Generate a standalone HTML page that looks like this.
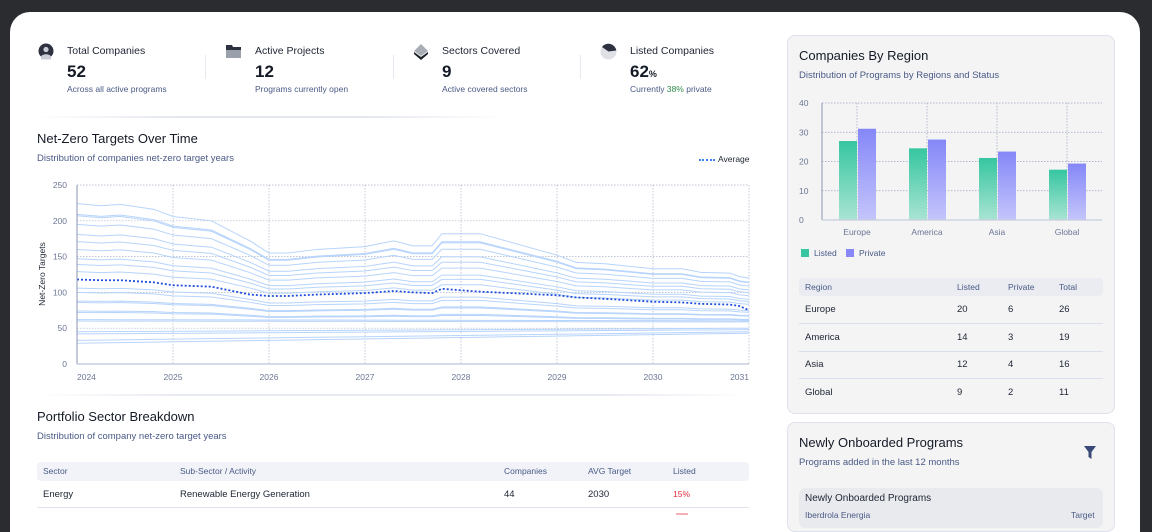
<!DOCTYPE html>
<html><head><meta charset="utf-8"><style>
*{margin:0;padding:0;box-sizing:border-box}
body{width:1152px;height:516px;background:#2b2c2f;font-family:"Liberation Sans",sans-serif;position:relative;overflow:hidden;color:#1d2433}
.main{position:absolute;left:10px;top:12px;width:1130px;height:520px;background:#fff;border-radius:20px 20px 0 0}
.a{position:absolute;white-space:nowrap}
.st{font-size:10.5px;color:#1d2433}
.sn{font-size:17px;font-weight:bold;color:#141a26}
.ss{font-size:8.5px;color:#4a5a86}
.h{font-size:13px;color:#141a26}
.sub{font-size:9.5px;color:#4a5a86}
.card{position:absolute;left:787px;width:328px;background:#f4f4f5;border:1px solid #dde2ec;border-radius:8px}
.t{font-size:9.5px;color:#1d2433}
.th{font-size:8.5px;color:#4a5a86}
</style></head><body>
<div class="main"></div>

<svg class="a" style="left:38px;top:43px" width="16" height="18"><circle cx="8" cy="8" r="7.5" fill="#2d3140"/><circle cx="8" cy="6.5" r="2.6" fill="#c9ccd4"/><path d="M3 13.5c1.5-3 8.5-3 10 0v3H3z" fill="#c9ccd4"/></svg>
<div class="a st" style="left:67px;top:45px">Total Companies</div>
<div class="a sn" style="left:67px;top:62px">52</div>
<div class="a ss" style="left:67px;top:84px">Across all active programs</div>
<div class="a" style="left:205px;top:55px;width:1px;height:24px;background:#e6e9f0"></div>

<svg class="a" style="left:226px;top:44px" width="15" height="15"><path d="M0 1h6l1 2h8v3H0z" fill="#2d3140"/><rect x="0" y="6" width="15" height="8" fill="#9aa0ab"/></svg>
<div class="a st" style="left:255px;top:45px">Active Projects</div>
<div class="a sn" style="left:255px;top:62px">12</div>
<div class="a ss" style="left:255px;top:84px">Programs currently open</div>
<div class="a" style="left:393px;top:55px;width:1px;height:24px;background:#e6e9f0"></div>

<svg class="a" style="left:413px;top:43px" width="16" height="18"><path d="M1 9l7 5 7-5v2l-7 6-7-6z" fill="#1d2028"/><path d="M8 1l7 7-7 5-7-5z" fill="#a9adb6"/></svg>
<div class="a st" style="left:442px;top:45px">Sectors Covered</div>
<div class="a sn" style="left:442px;top:62px">9</div>
<div class="a ss" style="left:442px;top:84px">Active covered sectors</div>
<div class="a" style="left:580px;top:55px;width:1px;height:24px;background:#e6e9f0"></div>

<svg class="a" style="left:600px;top:43px" width="17" height="17"><circle cx="8.5" cy="8.5" r="8" fill="#dfe1e6"/><path d="M8.5 8.5L2 4A8 8 0 0 1 16.3 7.5z" fill="#2d3140"/></svg>
<div class="a st" style="left:630px;top:45px">Listed Companies</div>
<div class="a sn" style="left:630px;top:62px">62<span style="font-size:9px">%</span></div>
<div class="a ss" style="left:630px;top:84px">Currently <span style="color:#2f8a4a">38%</span> private</div>

<div class="a" style="left:35px;top:116px;width:470px;height:2px;background:linear-gradient(90deg,#fff,#e4e7f0 30%,#e4e7f0 70%,#fff)"></div>

<div class="a h" style="left:37px;top:131px">Net-Zero Targets Over Time</div>
<div class="a sub" style="left:37px;top:153px">Distribution of companies net-zero target years</div>
<div class="a" style="left:699px;top:159px;width:16px;border-top:2px dotted #3b82f6"></div>
<div class="a" style="left:718px;top:154px;font-size:8.5px;color:#1d2433">Average</div>

<svg id="ch" class="a" style="left:0;top:0" width="760" height="390"></svg>

<div class="a" style="left:37px;top:394px;width:712px;height:2px;background:linear-gradient(90deg,#fff,#e8eaf2 20%,#e8eaf2 80%,#fff)"></div>

<div class="a h" style="left:37px;top:409px">Portfolio Sector Breakdown</div>
<div class="a sub" style="left:37px;top:431px">Distribution of company net-zero target years</div>
<div class="a" style="left:37px;top:462px;width:712px;height:19px;background:#f1f3f8;border-radius:4px"></div>
<div class="a th" style="left:43px;top:466px">Sector</div>
<div class="a th" style="left:180px;top:466px">Sub-Sector / Activity</div>
<div class="a th" style="left:504px;top:466px">Companies</div>
<div class="a th" style="left:588px;top:466px">AVG Target</div>
<div class="a th" style="left:673px;top:466px">Listed</div>
<div class="a t" style="left:43px;top:489px">Energy</div>
<div class="a t" style="left:180px;top:489px">Renewable Energy Generation</div>
<div class="a t" style="left:504px;top:489px">44</div>
<div class="a t" style="left:588px;top:489px">2030</div>
<div class="a" style="left:673px;top:489px;font-size:8.5px;color:#e0303a">15%</div>
<div class="a" style="left:37px;top:507px;width:712px;height:1px;background:#dfe3ec"></div>
<div class="a" style="left:676px;top:513px;width:12px;height:2px;background:#f4b0b4"></div>

<div class="card" style="top:35px;height:379px"></div>
<div class="a" style="left:799px;top:48px;font-size:13px;color:#141a26">Companies By Region</div>
<div class="a sub" style="left:799px;top:70px">Distribution of Programs by Regions and Status</div>
<svg id="bc" class="a" style="left:780px;top:90px" width="340" height="180"></svg>
<div class="a" style="left:801px;top:249px;width:8px;height:8px;background:#36c6a0"></div>
<div class="a th" style="left:814px;top:248px">Listed</div>
<div class="a" style="left:846px;top:249px;width:8px;height:8px;background:#8888f8"></div>
<div class="a th" style="left:859px;top:248px">Private</div>

<div class="a" style="left:799px;top:278px;width:304px;height:18px;background:#eaecf2;border-radius:4px"></div>
<div class="a th" style="left:805px;top:282px">Region</div>
<div class="a th" style="left:957px;top:282px">Listed</div>
<div class="a th" style="left:1008px;top:282px">Private</div>
<div class="a th" style="left:1059px;top:282px">Total</div>
<div id="rt"></div>

<div class="card" style="top:422px;height:110px"></div>
<div class="a" style="left:799px;top:435px;font-size:13px;color:#141a26">Newly Onboarded Programs</div>
<div class="a sub" style="left:799px;top:457px">Programs added in the last 12 months</div>
<svg class="a" style="left:1084px;top:446px" width="12" height="13"><path d="M0 0h12L7.5 6v7L4.5 11V6z" fill="#3a4a78"/></svg>
<div class="a" style="left:799px;top:488px;width:304px;height:40px;background:#e9eaee;border-radius:6px"></div>
<div class="a" style="left:805px;top:493px;font-size:10px;color:#1d2433">Newly Onboarded Programs</div>
<div class="a" style="left:805px;top:510px;font-size:8.5px;color:#4a5a86">Iberdrola Energia</div>
<div class="a" style="left:1071px;top:510px;font-size:8.5px;color:#4a5a86">Target</div>

<script>
(function(){
var S='http://www.w3.org/2000/svg';
function el(p,t,a){var e=document.createElementNS(S,t);for(var k in a)e.setAttribute(k,a[k]);p.appendChild(e);return e;}
var ch=document.getElementById('ch');
var X0=77,X1=749,Y0=364,sc=179/250;
function X(t){return X0+t*96;} function Y(v){return Y0-v*sc;}
for(var i=0;i<=5;i++){var y=Y(i*50);el(ch,'line',{x1:X0,x2:X1,y1:y,y2:y,stroke:'#aab3c8','stroke-width':0.7,'stroke-dasharray':'1.5 1.5'});
 var tx=el(ch,'text',{x:67,y:y+3,'font-size':8.5,fill:'#6b7794','text-anchor':'end','font-family':'Liberation Sans'});tx.textContent=i*50;}
for(var j=0;j<=7;j++){var x=X(j);el(ch,'line',{x1:x,x2:x,y1:Y(250),y2:Y0,stroke:'#aab3c8','stroke-width':0.7,'stroke-dasharray':'1.5 1.5'});
 var tx2=el(ch,'text',{x:j==0?X0:(j==7?X1:x),y:380,'font-size':8.5,fill:'#6b7794','text-anchor':j==0?'start':(j==7?'end':'middle'),'font-family':'Liberation Sans'});tx2.textContent=2024+j;}
var T=[0,.25,.45,.8,1,1.4,1.8,2,2.2,2.5,3,3.3,3.5,3.7,3.8,4.2,5,5.2,5.5,6,6.3,6.5,6.8,6.9,7];
var tp=[224,221,223,216,206,200,172,155,155,160,164,172,165,165,182,182,152,142,140,133,133,128,127,122,120];
var P=tp.map(function(v){return (v-55)/169;});
var starts=[224,209,207,195,181,171,160,147,139,129,106,100,88,86,74,72,62,60];
starts.forEach(function(v0){
 var pts=T.map(function(t,i){var v=55+(v0-55)*P[i];if(v0<70){v=v0-(v0-55)*0.25*(t/7)}return X(t)+','+Y(v);}).join(' ');
 el(ch,'polyline',{points:pts,fill:'none',stroke:'#b7d4fb','stroke-width':1});
});
[[45,50],[42,48],[33,45],[29,43]].forEach(function(p){
 var pts=T.map(function(t){var v=p[0]+(p[1]-p[0])*(t/7);return X(t)+','+Y(v);}).join(' ');
 el(ch,'polyline',{points:pts,fill:'none',stroke:'#b7d4fb','stroke-width':1});});
var avg=[118,117,117,114,110,108,97,95,95,97,99,102,100,99,105,101,96,93,91,87,86,84,83,81,75];
el(ch,'polyline',{points:T.map(function(t,i){return X(t)+','+Y(avg[i]);}).join(' '),fill:'none',stroke:'#1f4fdc','stroke-width':1.8,'stroke-dasharray':'2 2'});
el(ch,'line',{x1:X0,x2:X0,y1:Y(250),y2:Y0,stroke:'#8a96b4','stroke-width':1});
el(ch,'line',{x1:X0,x2:X1,y1:Y0,y2:Y0,stroke:'#c8cede','stroke-width':1.5});
var yl=el(ch,'text',{x:0,y:0,'font-size':8.5,fill:'#1d2433','text-anchor':'middle','font-family':'Liberation Sans',transform:'translate(45,274) rotate(-90)'});yl.textContent='Net-Zero Targets';

var bc=document.getElementById('bc');
var defs=el(bc,'defs',{});
var g1=el(defs,'linearGradient',{id:'g1',x1:0,y1:0,x2:0,y2:1});el(g1,'stop',{offset:0,'stop-color':'#36c6a0'});el(g1,'stop',{offset:1,'stop-color':'#a9e4d3'});
var g2=el(defs,'linearGradient',{id:'g2',x1:0,y1:0,x2:0,y2:1});el(g2,'stop',{offset:0,'stop-color':'#8587f8'});el(g2,'stop',{offset:1,'stop-color':'#c4c5fb'});
var bx0=42,bx1=322,by0=130,bs=117/40;
for(var i2=0;i2<=4;i2++){var yy=by0-i2*10*bs;if(i2>0)el(bc,'line',{x1:bx0,x2:bx1,y1:yy,y2:yy,stroke:'#9aa4bd','stroke-width':0.7,'stroke-dasharray':'1.5 1.5'});
 var t3=el(bc,'text',{x:19,y:yy+3,'font-size':8.5,fill:'#6b7794','font-family':'Liberation Sans'});t3.textContent=i2*10;}
var regs=['Europe','America','Asia','Global'],L=[27,24.5,21.2,17.2],Pv=[31.2,27.5,23.4,19.3];
for(var k=0;k<4;k++){var cx=bx0+35+k*70;
 el(bc,'line',{x1:cx,x2:cx,y1:by0-40*bs,y2:by0,stroke:'#9aa4bd','stroke-width':0.7,'stroke-dasharray':'1.5 1.5'});
 el(bc,'rect',{x:cx-18,y:by0-L[k]*bs,width:18,height:L[k]*bs,fill:'url(#g1)'});
 el(bc,'rect',{x:cx+1,y:by0-Pv[k]*bs,width:18,height:Pv[k]*bs,fill:'url(#g2)'});
 var t4=el(bc,'text',{x:cx,y:145,'font-size':8.5,fill:'#6b7794','text-anchor':'middle','font-family':'Liberation Sans'});t4.textContent=regs[k];}
el(bc,'line',{x1:bx0,x2:bx0,y1:by0-40*bs,y2:by0,stroke:'#8a96b4','stroke-width':1});
el(bc,'line',{x1:bx0,x2:bx1,y1:by0,y2:by0,stroke:'#c8cede','stroke-width':1.2});

var rows=[['Europe',20,6,26],['America',14,3,19],['Asia',12,4,16],['Global',9,2,11]],h='';
rows.forEach(function(r,i){var y=304+i*27.5;
 h+='<div class="a t" style="left:805px;top:'+y+'px">'+r[0]+'</div><div class="a t" style="left:957px;top:'+y+'px">'+r[1]+'</div><div class="a t" style="left:1008px;top:'+y+'px">'+r[2]+'</div><div class="a t" style="left:1059px;top:'+y+'px">'+r[3]+'</div>';
 if(i<3)h+='<div class="a" style="left:799px;top:'+(323+i*27.5)+'px;width:304px;height:1px;background:#d9dfec"></div>';});
document.getElementById('rt').innerHTML=h;
})();
</script>
</body></html>
